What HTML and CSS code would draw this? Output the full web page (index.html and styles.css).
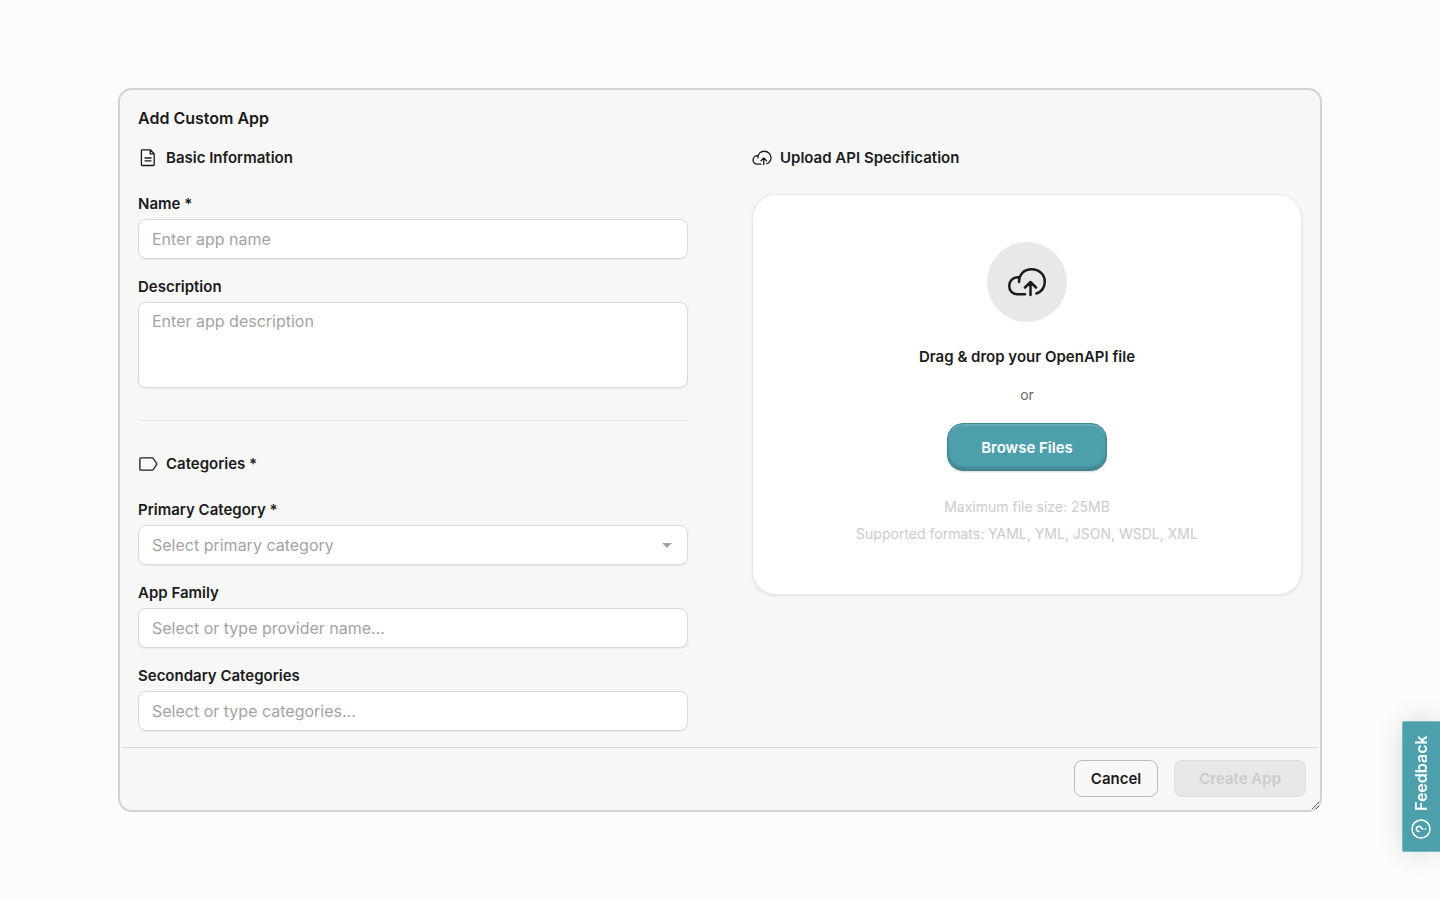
FILE: index.html
```
<!DOCTYPE html>
<html lang="en">
<head>
    <meta charset="UTF-8">
    <title>Add Custom App</title>
    <link rel="stylesheet" href="styles.css">
</head>
<body>

<form class="dialog" id="appForm">
    <h1 class="dialog-title">Add Custom App</h1>

    <div class="columns">
        <div class="column">
            <h2 class="section-title">
                <svg class="icon" viewBox="0 0 20 20">
                    <path d="M4.2 1.800h8l4 4v10.900a.8.8 0 0 1-.8.8H4.200a.8.8 0 0 1-.8-.8V2.600a.8.8 0 0 1 .8-.8z M12.200 1.800v4h4 M7 10h6 M7 12.800h6"/>
                </svg>
                Basic Information
            </h2>
            <div class="fields">
                <div class="field">
                    <label for="name">Name *</label>
                    <input required type="text" id="name" name="name" placeholder="Enter app name">
                </div>
                <div class="field">
                    <label for="description">Description</label>
                    <textarea id="description" name="description" placeholder="Enter app description"></textarea>
                </div>
            </div>

            <hr class="divider">

            <h2 class="section-title">
                <svg class="icon" viewBox="0 0 20 20">
                    <path d="M2.8 3.9h11.4a1.4 1.4 0 0 1 1.1.6l3.3 4.9a1 1 0 0 1 0 1.2l-3.3 4.9a1.4 1.4 0 0 1-1.1.6H2.8a.9.9 0 0 1-.9-.9V4.8a.9.9 0 0 1 .9-.9z"/>
                </svg>
                Categories *
            </h2>
            <div class="fields">
                <div class="field">
                    <label for="primary">Primary Category *</label>
                    <div class="select-wrap">
                        <select required id="primary" name="primary">
                            <option value="">Select primary category</option>
                        </select>
                    </div>
                </div>
                <div class="field">
                    <label for="family">App Family</label>
                    <input type="text" id="family" name="family" placeholder="Select or type provider name...">
                </div>
                <div class="field">
                    <label for="secondary">Secondary Categories</label>
                    <input type="text" id="secondary" name="secondary" placeholder="Select or type categories...">
                </div>
            </div>
        </div>

        <div class="column">
            <h2 class="section-title">
                <svg class="icon" viewBox="0 0 40 40">
                    <path class="thick" d="M18 32.300H10.500C5.500 32.300 2 28.500 2 24C2 19 6 15.200 11 15.200H12.800 M11.800 20C11.800 11.500 17.500 6.500 24.500 6.500C32.500 6.500 38 12.500 38 19.500C38 25 35 29.500 29.500 31.500 M23.500 33V20 M18 25.500L23.500 20L29 25.500"/>
                </svg>
                Upload API Specification
            </h2>
            <div class="dropzone">
                <div class="dropzone-icon">
                    <svg class="cloud" viewBox="0 0 40 40">
                        <path d="M18 32.300H10.500C5.500 32.300 2.200 28.500 2.200 24C2.200 19 6 15.200 11 15.200H12.800 M12 20C12 12 17.500 7.200 24.500 7.200C32.500 7.200 37.800 13 37.800 19.500C37.800 25 34.800 29.500 29.500 31.500 M23.500 33V20 M18 25.500L23.500 20L29 25.500"/>
                    </svg>
                </div>
                <p class="dropzone-title">Drag &amp; drop your OpenAPI file</p>
                <p class="dropzone-or">or</p>
                <button type="button" class="browse">Browse Files</button>
                <p class="hint">Maximum file size: 25MB</p>
                <p class="hint">Supported formats: YAML, YML, JSON, WSDL, XML</p>
            </div>
        </div>
    </div>

    <div class="footer">
        <button type="button" class="btn">Cancel</button>
        <button type="submit" class="btn btn-create" disabled>Create App</button>
    </div>
</form>

<button type="button" class="feedback">
    <svg class="feedback-icon" viewBox="0 0 20 20">
        <circle cx="10" cy="10" r="9"/>
        <path d="M7.4 8a2.6 2.6 0 1 1 3.700 2.300c-.8.4-1.100.8-1.100 1.600 M10 14.300v.4"/>
    </svg>
    Feedback
</button>

</body>
</html>
```
FILE: styles.css
```
* {
    box-sizing: border-box;
}

body {
    margin: 0;
    min-height: 100vh;
    display: flex;
    align-items: center;
    justify-content: center;
    background: #fcfcfc;
    color: #1b1b1b;
    font-family: Inter, "Liberation Sans", sans-serif;
    font-size: 16px;
}

h1, h2, p {
    margin: 0;
}

button, input, textarea, select {
    font-family: inherit;
}

svg {
    fill: none;
    stroke: currentColor;
    stroke-linecap: round;
    stroke-linejoin: round;
}

.dialog {
    width: 84%;
    max-width: 1204px;
    overflow: hidden;
    resize: both;
    background: #f7f7f7;
    border: 2px solid #d2d2d2;
    border-radius: 14px;
}

.dialog-title {
    padding: 16px 18px 18px;
    font-size: 16px;
    line-height: 24px;
    font-weight: 600;
}

.columns {
    display: grid;
    grid-template-columns: 1fr 1fr;
    gap: 64px;
    padding: 0 18px 16px;
}

.section-title {
    display: flex;
    align-items: center;
    gap: 8px;
    margin-bottom: 26px;
    font-size: 15px;
    line-height: 20px;
    font-weight: 600;
}

.icon {
    width: 20px;
    height: 20px;
    stroke-width: 1.3;
}

.icon .thick {
    stroke-width: 2.6;
}

.fields {
    display: grid;
    gap: 18px;
}

.field {
    display: flex;
    flex-direction: column;
    gap: 5px;
}

.field label {
    font-size: 15px;
    line-height: 20px;
    font-weight: 600;
}

.field input,
.field textarea,
.field select {
    display: block;
    width: 100%;
    height: 40px;
    padding: 0 13px;
    background: #fff;
    color: #a3a3a3;
    border: 1px solid #d9d9d9;
    border-radius: 8px;
    box-shadow: 0 1px 2px rgba(0, 0, 0, 0.06);
    font-size: 16px;
}

.field textarea {
    height: 86px;
    padding: 6px 13px;
    line-height: 24px;
    resize: none;
}

.field select {
    appearance: none;
}

.field input::placeholder,
.field textarea::placeholder {
    color: #a3a3a3;
}

.select-wrap {
    position: relative;
}

.select-wrap::after {
    content: "";
    position: absolute;
    right: 16px;
    top: 18px;
    border: 5px solid transparent;
    border-top-color: #a3a3a3;
    border-bottom: 0;
    pointer-events: none;
}

.divider {
    height: 1px;
    margin: 32px 0 33px;
    border: 0;
    background: #e8e8e8;
}

.dropzone {
    display: flex;
    flex-direction: column;
    align-items: center;
    padding: 47px 24px 50px;
    background: #fff;
    border: 1px solid #e8e8e8;
    border-radius: 24px;
    box-shadow: 0 1px 3px rgba(0, 0, 0, 0.1);
}

.dropzone-icon {
    display: flex;
    align-items: center;
    justify-content: center;
    width: 80px;
    height: 80px;
    margin-bottom: 23px;
    border-radius: 50%;
    background: #e8e8e8;
}

.cloud {
    width: 40px;
    height: 40px;
    stroke-width: 2.5;
}

.dropzone-title {
    font-size: 15px;
    line-height: 24px;
    font-weight: 600;
}

.dropzone-or {
    margin: 16px 0 18px;
    color: #666;
    font-size: 14px;
    line-height: 20px;
}

.browse {
    width: 160px;
    height: 48px;
    margin-bottom: 26px;
    background: #4d9fab;
    color: #fff;
    border: 1px solid #3f8690;
    border-radius: 16px;
    box-shadow: inset 0 2px 1px rgba(255, 255, 255, 0.15), inset 0 -3px 3px rgba(0, 0, 0, 0.16), 0 1px 2px rgba(0, 0, 0, 0.15);
    font-size: 15px;
    font-weight: 600;
    cursor: pointer;
}

.hint {
    color: #cbcbcb;
    font-size: 14px;
    line-height: 20px;
}

.hint + .hint {
    margin-top: 7px;
}

.footer {
    display: flex;
    justify-content: flex-end;
    gap: 16px;
    margin: 0 2px;
    padding: 12px 12px 13px;
    border-top: 1px solid #d6d6d6;
}

.btn {
    height: 37px;
    padding: 0 16px;
    background: #f8f8f8;
    color: #1b1b1b;
    border: 1px solid #bcbcbc;
    border-radius: 8px;
    font-size: 15px;
    font-weight: 600;
    cursor: pointer;
}

.btn-create {
    padding: 0 24px;
    background: #e8e8e8;
    color: #cbcbcb;
    border-color: #dcdcdc;
    cursor: default;
}

/* side tab, text reads bottom to top */
.feedback {
    position: fixed;
    right: 0;
    bottom: 48px;
    display: flex;
    align-items: center;
    gap: 8px;
    width: 38px;
    height: 131px;
    padding: 12px 9px;
    writing-mode: vertical-rl;
    transform: rotate(180deg);
    background: #4d9fab;
    color: #fff;
    border: 1px solid #7cbac3;
    border-left: 0;
    border-radius: 0 2px 2px 0;
    box-shadow: 0 0 24px rgba(0, 0, 0, 0.14);
    font-size: 16px;
    font-weight: 600;
    cursor: pointer;
}

.feedback-icon {
    flex: none;
    width: 20px;
    height: 20px;
    stroke-width: 1.5;
    transform: rotate(90deg);
}
```
